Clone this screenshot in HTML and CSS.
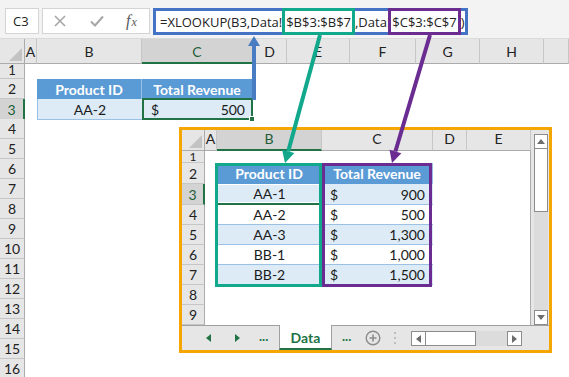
FILE: index.html
```html
<!DOCTYPE html>
<html>
<head>
<meta charset="utf-8">
<title>XLOOKUP</title>
<link rel="stylesheet" href="styles.css">
</head>
<body>
<div class="app">
  <div class="topbar">
    <div class="namebox">C3</div>
    <div class="fxbtns">
      <svg class="ico x" width="12" height="12" viewBox="0 0 12 12"><path d="M1 1L11 11M11 1L1 11" stroke="#a6a6a6" stroke-width="1.6" fill="none"/></svg>
      <svg class="ico ok" width="14" height="12" viewBox="0 0 14 12"><path d="M1 6.5L5 10.5L13 1.5" stroke="#a6a6a6" stroke-width="2" fill="none"/></svg>
      <span class="fx"><span class="f">f</span><span class="xx">x</span></span>
    </div>
    <div class="fxinput"><span>=XLOOKUP(B3,Data!</span><span class="hl teal">$B$3:$B$7</span><span>,Data!</span><span class="hl purple">$C$3:$C$7</span><span>)</span></div>
  </div>

  <div class="sheet">
    <div class="r hdr">
      <div class="corner"><span class="tri"></span></div>
      <div class="ch">A</div><div class="ch">B</div><div class="ch csel">C</div><div class="ch">D</div>
      <div class="ch">E</div><div class="ch">F</div><div class="ch">G</div><div class="ch">H</div><div class="ch"></div>
    </div>
    <div class="r r1"><div class="rh">1</div></div>
    <div class="r"><div class="rh">2</div><div></div><div class="th">Product ID</div><div class="th">Total Revenue</div></div>
    <div class="r"><div class="rh rsel">3</div><div></div><div class="td bl">AA-2</div><div class="td sel"><span>$</span><span>500</span><span class="handle"></span></div></div>
    <div class="r"><div class="rh">4</div></div>
    <div class="r"><div class="rh">5</div></div>
    <div class="r"><div class="rh">6</div></div>
    <div class="r"><div class="rh">7</div></div>
    <div class="r"><div class="rh">8</div></div>
    <div class="r"><div class="rh">9</div></div>
    <div class="r"><div class="rh">10</div></div>
    <div class="r"><div class="rh">11</div></div>
    <div class="r"><div class="rh">12</div></div>
    <div class="r"><div class="rh">13</div></div>
    <div class="r"><div class="rh">14</div></div>
    <div class="r"><div class="rh">15</div></div>
    <div class="r"><div class="rh">16</div></div>
  </div>

  <div class="shot">
    <div class="imain">
      <div class="igrid">
        <div class="ir ihdr">
          <div class="corner"><span class="tri"></span></div>
          <div class="ch">A</div><div class="ch csel">B</div><div class="ch">C</div><div class="ch">D</div><div class="ch">E</div>
        </div>
        <div class="ir ir1"><div class="rh">1</div></div>
        <div class="ir ir2"><div class="rh">2</div><div></div><div class="th">Product ID</div><div class="th">Total Revenue</div></div>
        <div class="ir ir3"><div class="rh rsel">3</div><div></div><div class="itd b isel">AA-1</div><div class="itd b num"><span>$</span><span>900</span></div></div>
        <div class="ir"><div class="rh">4</div><div></div><div class="itd">AA-2</div><div class="itd num"><span>$</span><span>500</span></div></div>
        <div class="ir"><div class="rh">5</div><div></div><div class="itd b">AA-3</div><div class="itd b num"><span>$</span><span>1,300</span></div></div>
        <div class="ir"><div class="rh">6</div><div></div><div class="itd">BB-1</div><div class="itd num"><span>$</span><span>1,000</span></div></div>
        <div class="ir"><div class="rh">7</div><div></div><div class="itd b">BB-2</div><div class="itd b num"><span>$</span><span>1,500</span></div></div>
        <div class="ir"><div class="rh">8</div></div>
        <div class="ir"><div class="rh">9</div></div>
      </div>
      <div class="vscroll">
        <div class="sbtn"><svg width="8" height="5" viewBox="0 0 8 5"><path d="M0 5L4 0L8 5Z" fill="#6d6d6d"/></svg></div>
        <div class="vthumb"></div>
        <div class="vtrack"></div>
        <div class="sbtn"><svg width="8" height="5" viewBox="0 0 8 5"><path d="M0 0L8 0L4 5Z" fill="#6d6d6d"/></svg></div>
      </div>
    </div>
    <div class="tabs">
      <div class="tnav">
        <svg class="tarr" width="5" height="8" viewBox="0 0 5 8"><path d="M5 0L0 4L5 8Z" fill="#217346"/></svg>
        <svg class="tarr nx" width="5" height="8" viewBox="0 0 5 8"><path d="M0 0L5 4L0 8Z" fill="#217346"/></svg>
        <span class="tdots">...</span>
      </div>
      <div class="tab">Data</div>
      <div class="trest">
        <span class="tdots rt">...</span>
        <svg class="plus" width="16" height="16" viewBox="0 0 16 16"><circle cx="8" cy="8" r="6.8" stroke="#8c8c8c" stroke-width="1.4" fill="none"/><path d="M8 4.5V11.5M4.5 8H11.5" stroke="#8c8c8c" stroke-width="1.6"/></svg>
        <span class="vsep"><i></i><i></i><i></i></span>
        <div class="hscroll">
          <div class="hbtn"><svg width="5" height="8" viewBox="0 0 5 8"><path d="M5 0L0 4L5 8Z" fill="#6d6d6d"/></svg></div>
          <div class="hthumb"></div>
          <div class="htrack"></div>
          <div class="hbtn"><svg width="5" height="8" viewBox="0 0 5 8"><path d="M0 0L5 4L0 8Z" fill="#6d6d6d"/></svg></div>
        </div>
      </div>
    </div>
    <div class="box tbox"></div>
    <div class="box pbox"></div>
  </div>

  <svg class="arrows" width="569" height="377" viewBox="0 0 569 377">
    <line x1="254" y1="100" x2="254" y2="45" stroke="#4a7cc4" stroke-width="4"/>
    <polygon points="254,36 248,46 260,46" fill="#4a7cc4"/>
    <line x1="320" y1="35" x2="288.2" y2="151.4" stroke="#12a88c" stroke-width="4"/>
    <polygon points="285,163 294.4,153.1 282.1,149.7" fill="#12a88c"/>
    <line x1="430" y1="35" x2="395.4" y2="151.5" stroke="#6a2c91" stroke-width="4"/>
    <polygon points="392,163 401.4,153.2 389.5,149.8" fill="#6a2c91"/>
  </svg>
</div>
</body>
</html>
```

FILE: styles.css
```css
* { box-sizing: border-box; margin: 0; padding: 0; }
html, body { width: 569px; height: 377px; overflow: hidden; background: #fff; }
body { font-family: "Lato", "Liberation Sans", sans-serif; color: #1a1a1a; }
.app { position: relative; width: 569px; height: 377px; overflow: hidden; }

/* top formula bar */
.topbar { height: 39px; background: #f3f3f3; display: flex; align-items: flex-start; padding-top: 8px; border-bottom: 1px solid #dadada; }
.namebox { margin-left: 5px; width: 34px; height: 26px; background: #fff; border: 1px solid #d4d4d4; font: 13px "Open Sans", sans-serif; padding-left: 7px; line-height: 24px; color: #222; }
.fxbtns { margin-left: 3px; width: 108px; height: 26px; background: #fff; border: 1px solid #d4d4d4; display: flex; align-items: center; padding-left: 11px; }
.ico.ok { margin-left: 24px; }
.fx { margin-left: 22px; font-family: "Liberation Serif", serif; font-style: italic; color: #595959; display: flex; align-items: baseline; }
.fx .f { font-size: 16px; }
.fx .xx { font-size: 12px; margin-left: 1px; }
.fxinput { margin-left: 3px; width: 315px; height: 27px; border: 3px solid #4472c4; background: #fff; display: flex; align-items: center; padding-left: 4px; font: 13px "Open Sans", sans-serif; color: #222; white-space: nowrap; }
.hl { align-self: stretch; margin: -3px 0; border: 3px solid; display: flex; align-items: center; padding: 0 1px; }
.hl.teal { border-color: #12a88c; }
.hl.purple { border-color: #6a2c91; margin-left: -2px; }

/* outer sheet */
.r { display: grid; grid-template-columns: 25px 12px 105px 111px 34px 63px 66px 64px 64px 25px; height: 20px; }
.r.hdr { height: 25px; background: #e6e6e6; }
.r.r1 { height: 15px; }
.corner { background: #e6e6e6; border-right: 1px solid #ababab; border-bottom: 1px solid #ababab; position: relative; }
.tri { position: absolute; right: 2px; bottom: 2px; width: 0; height: 0; border-left: 13px solid transparent; border-bottom: 13px solid #c3c3c3; }
.ch { background: #e6e6e6; border-right: 1px solid #c6c6c6; border-bottom: 1px solid #ababab; display: flex; align-items: flex-end; justify-content: center; padding-bottom: 3px; font-size: 14px; color: #222; }
.ch.csel { background: #d3d3d3; border-bottom: 2px solid #217346; color: #1e5c38; padding-bottom: 2px; }
.rh { background: #e6e6e6; border-right: 1px solid #ababab; border-bottom: 1px solid #c6c6c6; display: flex; align-items: center; justify-content: center; font-size: 14px; color: #222; }
.r1 .rh { align-items: flex-start; font-size: 13px; line-height: 13px; }
.rh.rsel { background: #d3d3d3; border-right: 2px solid #217346; color: #1e5c38; }
.th { background: #5b9bd5; color: #fff; font-weight: 700; font-size: 14px; display: flex; align-items: center; justify-content: center; border-right: 1px solid #9bc2e6; }
.td { background: #ddebf7; font-size: 14px; display: flex; align-items: center; border-bottom: 1px solid #9bc2e6; }
.td.bl { justify-content: center; border-left: 1px solid #9bc2e6; }
.td.sel { border: 2px solid #217346; justify-content: space-between; padding: 0 6px 0 7px; position: relative; height: 22px; margin-top: -1px; }
.handle { position: absolute; right: -4px; bottom: -4px; width: 6px; height: 6px; background: #217346; border: 1px solid #fff; }

/* inner screenshot */
.shot { position: absolute; left: 179px; top: 127px; width: 373px; height: 226px; border: 3px solid #f5a600; background: #fff; display: flex; flex-direction: column; }
.imain { display: flex; height: 195px; flex-shrink: 0; }
.igrid { width: 349px; border-right: 1px solid #ababab; }
.ir { display: grid; grid-template-columns: 23px 12px 105px 111px 34px 64px; height: 20px; }
.ir.ihdr { height: 21px; }
.ir.ir1 { height: 12px; }
.ir1 .rh { align-items: flex-start; font-size: 12px; line-height: 11px; }
.ir.ir2, .ir.ir3 { height: 21px; }
.itd { font-size: 14px; display: flex; align-items: center; justify-content: center; border-bottom: 1px solid #9bc2e6; background: #fff; }
.itd.b { background: #ddebf7; }
.itd.num { justify-content: space-between; padding: 0 8px 0 8px; }
.itd.isel { box-shadow: inset 0 0 0 1px #fff; border-bottom: 2px solid #217346; }
.vscroll { width: 18px; background: #e6e6e6; padding: 4px 1px 0 3px; display: flex; flex-direction: column; }
.sbtn { height: 15px; border: 1px solid #8c8c8c; background: #fff; display: flex; align-items: center; justify-content: center; flex-shrink: 0; }
.vthumb { height: 63px; background: #fff; border: 1px solid #8c8c8c; border-top: 0; flex-shrink: 0; }
.vtrack { flex: 1; background: #dcdcdc; }
.tabs { height: 25px; display: flex; background: #e6e6e6; }
.tnav { width: 97px; flex-shrink: 0; border-top: 1px solid #a0a0a0; display: flex; align-items: center; }
.tarr { margin-left: 24px; }
.tarr.nx { margin-left: 24px; }
.tdots { margin-left: 19px; color: #217346; font-weight: 700; font-size: 13px; padding-bottom: 4px; }
.tab { width: 53px; flex-shrink: 0; background: #fff; border-left: 1px solid #a0a0a0; border-right: 1px solid #a0a0a0; border-bottom: 2px solid #217346; color: #217346; font-weight: 700; font-size: 14px; display: flex; align-items: center; justify-content: center; padding-top: 1px; }
.trest { flex: 1; border-top: 1px solid #a0a0a0; display: flex; align-items: center; }
.tdots.rt { margin-left: 10px; }
.plus { margin-left: 14px; flex-shrink: 0; }
.vsep { margin-left: 13px; width: 2px; display: flex; flex-direction: column; gap: 3px; }
.vsep i { display: block; width: 2px; height: 2px; background: #bdbdbd; }
.hscroll { margin-left: 15px; width: 111px; height: 15px; display: flex; margin-top: 1px; flex-shrink: 0; }
.hbtn { width: 15px; border: 1px solid #8c8c8c; background: #fff; display: flex; align-items: center; justify-content: center; }
.hthumb { width: 50px; background: #fff; border: 1px solid #8c8c8c; border-left: 0; }
.htrack { flex: 1; background: #dcdcdc; }
.box { position: absolute; top: 33px; height: 124px; border: 3px solid; }
.tbox { left: 33px; width: 107px; border-color: #12a88c; }
.pbox { left: 140px; width: 110px; border-color: #6a2c91; }

.arrows { position: absolute; left: 0; top: 0; pointer-events: none; }
```
